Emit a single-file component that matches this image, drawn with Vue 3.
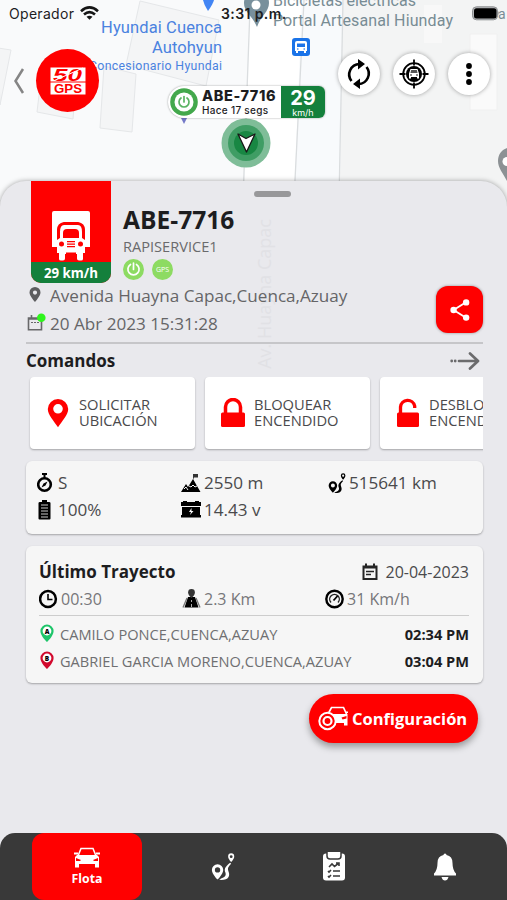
<template>
  <div class="screen">
    <svg class="map" width="507" height="200" viewBox="0 0 507 200">
      <rect width="507" height="200" fill="#f9fafb" />
      <path d="M342 0h165v200H340z" fill="#f3f4f4" />
      <path d="M250 0h52l-8 200h-50z" fill="#fff" />
      <path d="M302 0h40l-2 200h-46z" fill="#f8fafc" />
      <g fill="#f4f5f6" stroke="#e5e7e9">
        <path d="M140 1l79 19-13 66-80-21z" />
        <path d="M104 66l32 8-4 58-32-4z" />
        <path d="M-2 48l13 2-11 55z" />
        <path d="M40 87l35 7-2 25-36-7z" />
        <path d="M470 34h27v76h-27z" fill="#fafafa" stroke="#f0f0f0" />
        <path d="M424 5h18v38h-18z" fill="#f8f8f8" stroke="none" />
      </g>
      <path d="M250 8l-7 192M304 0l-10 200M343 0l-4 200" fill="none" stroke="#dadddf" stroke-width="1.3" />
      <path d="M203 0h11q-1 4-6 11-4-6-5-11z" fill="#4285f4" />
      <path d="M181 118h6l-3 6z" fill="#7479c8" />
      <path d="M244 3a12 12 0 0 1 25 0c0 9-8 12-12 24-5-12-13-15-13-24z" fill="#78909c" />
      <circle cx="256" cy="5" r="4.500" fill="#fff" />
      <g class="place">
        <text x="222" y="33" text-anchor="end" font-size="16.500" textLength="121">Hyundai Cuenca</text>
        <text x="222" y="53" text-anchor="end" font-size="16.500" textLength="70">Autohyun</text>
        <text x="222" y="70" text-anchor="end" font-size="12.300" textLength="133">Concesionario Hyundai</text>
      </g>
      <g class="place grey">
        <text x="273" y="6" font-size="16" textLength="143">Bicicletas eléctricas</text>
        <text x="273" y="26" font-size="16" textLength="180">Portal Artesanal Hiunday</text>
        <text x="498" y="19" font-size="14">a</text>
      </g>
      <rect x="292" y="38" width="18" height="18" rx="3" fill="#1a73e8" />
      <path d="M297 41h8q2 0 2 2v8h-1v2h-2v-2h-6v2h-2v-2h-1v-8q0-2 2-2z" fill="#fff" />
      <path d="M297 43.500h8v3.500h-8z" fill="#1a73e8" />
      <circle cx="297.800" cy="49" r=".8" fill="#1a73e8" />
      <circle cx="304.200" cy="49" r=".8" fill="#1a73e8" />
      <path d="M507 148c-6 2-9 7-9 13 0 7 5 12 9 20z" fill="#8c9194" />
      <path d="M507 157a4 4 0 0 0 0 9z" fill="#fff" />
      <circle cx="246" cy="143" r="24.500" fill="#7fbd98" />
      <circle cx="246" cy="143" r="18" fill="#3f9d64" />
      <circle cx="246" cy="143" r="12" fill="#188743" />
      <path d="M238 134l8 4.500 9-4.500-8.500 18z" fill="#fff" stroke="#161616" stroke-width="1.300" stroke-linejoin="round" />
    </svg>

    <div class="status-bar">
      <span class="carrier">Operador</span>
      <svg class="wifi" width="19" height="14" viewBox="0 0 19 14">
        <g fill="none" stroke="#161616" stroke-width="2.600">
          <path d="M1 5.200q8.500-7.500 17 0" />
          <path d="M4 8.600q5.500-4.800 11 0" />
        </g>
        <path d="M6.500 10.800q3-2.300 6 0l-3 3z" fill="#161616" />
      </svg>
      <span class="time">3:31 p.m.</span>
      <svg class="battery" width="28" height="15" viewBox="0 0 28 15">
        <rect x=".5" y=".8" width="25" height="13" rx="4" fill="#b5b7b9" stroke="#8e9092" />
        <rect x="2" y="2.300" width="22.500" height="10.200" rx="2.500" fill="#000" />
        <path d="M26.500 5q1.500 2 0 4.500z" fill="#777" />
      </svg>
    </div>

    <header class="toolbar">
      <svg class="back" width="12" height="28" viewBox="0 0 12 28">
        <path d="M10 2L2.500 14 10 26" fill="none" stroke="#858585" stroke-width="2.500" />
      </svg>
      <div class="brand">
        <svg width="36" height="28" viewBox="0 0 36 28">
          <rect x=".5" y=".5" width="35" height="27" fill="#fff" />
          <text x="3" y="13.500" class="brand-num" textLength="29" lengthAdjust="spacingAndGlyphs">50</text>
          <path d="M1 15L33 1" stroke="#fff" stroke-width="1" />
          <path d="M0 15h36" stroke="#f00" stroke-width="1" />
          <text x="4" y="25.500" class="brand-gps" textLength="28" lengthAdjust="spacingAndGlyphs">GPS</text>
        </svg>
      </div>
      <div class="actions">
        <button class="round">
          <svg width="28" height="30" viewBox="0 0 28 30">
            <g fill="none" stroke="#000" stroke-width="2.600">
              <path d="M6.500 22A10.500 10.500 0 0 1 14.500 5" />
              <path d="M21.500 8A10.500 10.500 0 0 1 13.500 25" />
            </g>
            <path d="M13 0l7 5-7 5.500zM15 19.500l-7 5.500 7 5z" />
          </svg>
        </button>
        <button class="round">
          <svg width="30" height="30" viewBox="0 0 30 30">
            <g fill="none" stroke="#000" stroke-width="1.800">
              <circle cx="15" cy="15" r="10.800" />
              <path d="M15 .5v6M15 23.500v6M.5 15h6M23.500 15h6" />
            </g>
            <circle cx="15" cy="15" r="8" />
            <path d="M11.500 10h7l1.500 4.500v5h-2v-1.500h-6v1.500h-2v-5z" fill="#fff" />
            <path d="M12.200 11h5.600l.8 3h-7.200z" fill="#555" />
            <circle cx="12" cy="16" r=".8" /><circle cx="18" cy="16" r=".8" />
          </svg>
        </button>
        <button class="round">
          <svg width="8" height="24" viewBox="0 0 8 24">
            <circle cx="4" cy="4" r="2.900" /><circle cx="4" cy="12" r="2.900" /><circle cx="4" cy="20" r="2.900" />
          </svg>
        </button>
      </div>
    </header>

    <div class="marker-label">
      <svg class="marker-power" width="28" height="28" viewBox="0 0 28 28">
        <circle cx="14" cy="14" r="13.800" fill="#43a84c" />
        <circle cx="14" cy="14" r="9.500" fill="#fff" />
        <g fill="none" stroke="#5ab463" stroke-width="1.700" stroke-linecap="round">
          <path d="M11 10a5 5 0 1 0 6 0" /><path d="M14 8.500V14" />
        </g>
      </svg>
      <div class="marker-text">
        <strong>{{ vehicle.plate }}</strong>
        <span>Hace 17 segs</span>
      </div>
      <div class="marker-speed">
        <strong>{{ vehicle.speed }}</strong>
        <span>km/h</span>
      </div>
    </div>

    <section class="sheet">
      <div class="handle"></div>
      <div class="street">Av. Huayna Capac</div>

      <div class="vehicle">
        <div class="vehicle-card">
          <svg width="40" height="50" viewBox="0 0 40 50">
            <path d="M3 0h34q2 0 2 2v34h-5V19q0-7-7-8H13q-7 1-7 8v17H1V2q0-2 2-2z" fill="#fff" />
            <path d="M7 36V21q0-9 9-9h8q9 0 9 9v15" fill="none" stroke="#f00" stroke-width="1.500" />
            <path d="M13 14h14q4 0 4 7v6l3 2v13h-2v6q0 1.500-2 1.500h-2q-2 0-2-2V43H14v4.500q0 2-2 2h-2q-2 0-2-1.500v-6H6V29l3-2v-6q0-7 4-7z" fill="#fff" />
            <path d="M12 27v-5q0-4 4-4h8q4 0 4 4v5z" fill="#f00" />
            <g fill="#f00">
              <circle cx="10.500" cy="33" r="2.500" /><circle cx="29.500" cy="33" r="2.500" />
              <path d="M16 30h8v1.300h-8zM16 32.500h8v1.300h-8zM16 35h8v1.300h-8z" />
              <path d="M15 41.500h10v2.500H15z" />
            </g>
          </svg>
          <div class="vehicle-speed">{{ vehicle.speed }} km/h</div>
        </div>
        <div class="vehicle-info">
          <h1>{{ vehicle.plate }}</h1>
          <p>RAPISERVICE1</p>
          <div class="badges">
            <span class="badge">
              <svg width="21" height="21" viewBox="0 0 21 21">
                <path d="M7.500 5.500a5.600 5.600 0 1 0 6 0M10.500 4v6.500" fill="none" stroke="#fff" stroke-width="1.700" stroke-linecap="round" />
              </svg>
            </span>
            <span class="badge">GPS</span>
          </div>
        </div>
      </div>

      <div class="place-block">
        <div>
          <div class="place-row">
            <svg width="24" height="20" viewBox="0 0 24 20">
              <path d="M9 2a5.500 5.500 0 0 0-5.500 5.500C3.500 11 9 17 9 17s5.500-6 5.500-9.500A5.500 5.500 0 0 0 9 2zm0 3.500a2 2 0 1 1 0 4.200 2 2 0 0 1 0-4.200z" fill="#5d5d5f" />
            </svg>
            <span class="address">Avenida Huayna Capac,Cuenca,Azuay</span>
          </div>
          <div class="place-row">
            <svg width="24" height="20" viewBox="0 0 24 20">
              <path d="M2.500 5h13v11.700h-13zM3 6h12M5.500 2v3" fill="none" stroke="#68686a" stroke-width="1.600" />
              <path d="M5 9.500h2M8 9.500h2M11 9.500h2" stroke="#68686a" stroke-width="1.200" />
              <circle cx="15.300" cy="4.700" r="4.300" fill="#2ff51c" />
            </svg>
            <span class="date">20 Abr 2023 15:31:28</span>
          </div>
        </div>
        <button class="share">
          <svg width="22" height="24" viewBox="0 0 24 24">
            <path d="M18.500 3.500L5 12l13.500 8.500" fill="none" stroke="#fff" stroke-width="2" />
            <g fill="#fff"><circle cx="18.700" cy="3.700" r="3.500" /><circle cx="5" cy="12" r="3.500" /><circle cx="18.700" cy="20.300" r="3.500" /></g>
          </svg>
        </button>
      </div>

      <div class="commands-head">
        <h2>Comandos</h2>
        <svg width="30" height="18" viewBox="0 0 30 18">
          <path d="M9 9h18M20 1.500L28 9l-8 7.500" fill="none" stroke="#6b6b6d" stroke-width="2.700" stroke-linejoin="round" stroke-linecap="round" />
          <circle cx="1.700" cy="9" r="1.400" fill="#6b6b6d" /><circle cx="5.200" cy="9" r="1.400" fill="#6b6b6d" />
        </svg>
      </div>
      <div class="commands">
        <button v-for="c in commands" :key="c.icon" class="command">
          <svg width="26" height="30" viewBox="0 0 26 30" fill="#f00">
            <path v-if="c.icon === 'pin'" d="M13 1A10.200 10.200 0 0 0 2.800 11C2.800 17 9 23 13 29.300 17 23 23.200 17 23.200 11A10.200 10.200 0 0 0 13 1zm0 5a4.800 4.800 0 1 1 0 9.600A4.800 4.800 0 0 1 13 6z" />
            <template v-else>
              <rect :x="c.icon === 'lock' ? 1 : 2" y="14.500" :width="c.icon === 'lock' ? 24 : 22" height="14.500" rx="1.500" />
              <path v-if="c.icon === 'lock'" d="M5.500 15V9a7.500 7.500 0 0 1 15 0v6" fill="none" stroke="#f00" stroke-width="3.500" />
              <path v-else d="M5.500 15V9a7.200 7.200 0 0 1 14.200-1v2" fill="none" stroke="#f00" stroke-width="3.300" />
            </template>
          </svg>
          <span>{{ c.top }}<br>{{ c.bottom }}</span>
        </button>
      </div>

      <div class="card stats">
        <div class="stat">
          <svg width="18" height="20" viewBox="0 0 18 20">
            <circle cx="7.500" cy="11.500" r="6.300" fill="none" stroke="#000" stroke-width="2.600" />
            <path d="M5 0h5v2H5zM6.500 0h2v5h-2zM4.500 14.500l2-4 4-2-2 4z" />
          </svg>
          <span>S</span>
        </div>
        <div class="stat">
          <svg width="20" height="20" viewBox="0 0 20 20">
            <path d="M0 19l5-8 2 3 5-8 7.500 13z" />
            <path d="M12 7V1h5v3.500h-4" fill="#333" />
            <path d="M8 13l2 1 2-2 2 2 2-1M3 16l2-2 2 3" fill="none" stroke="#f6f6f6" stroke-width="1" />
          </svg>
          <span>2550 m</span>
        </div>
        <div class="stat">
          <svg width="18" height="20" viewBox="0 0 22 24">
            <use href="#route" />
          </svg>
          <span>515641 km</span>
        </div>
        <div class="stat">
          <svg width="18" height="20" viewBox="0 0 18 20">
            <path d="M5 0h5v2h2q1.500 0 1.500 1v15.500q0 1-1 1h-10q-1 0-1-1V3q0-1 1.500-1h2z" />
            <path d="M4 5h7M4 8h7M4 11h7M4 14h7M4 17h7" stroke="#c9c9c9" stroke-width="1" />
          </svg>
          <span>100%</span>
        </div>
        <div class="stat">
          <svg width="20" height="20" viewBox="0 0 20 20">
            <path d="M0 2h2V1h4v1h8V1h4v1h2v4H0zM1 7h18v8H1zM0 15h20v2.500H0z" />
            <path d="M10.500 8L8 12h2l-1 3 3.500-4h-2z" fill="#fff" />
          </svg>
          <span>14.43 v</span>
        </div>
      </div>

      <div class="card trip">
        <div class="trip-head">
          <h2>Último Trayecto</h2>
          <span class="trip-date">
            <svg width="16" height="18" viewBox="0 0 16 18">
              <path d="M1.500 3.500h13V16h-13zM1 4.500h14M4 .5V4M12 .5V4" fill="none" stroke="#252525" stroke-width="2" />
              <path d="M4 8.500h8M4 11.500h5" stroke="#252525" stroke-width="1.500" />
            </svg>
            20-04-2023
          </span>
        </div>
        <div class="trip-stats">
          <div class="stat">
            <svg width="20" height="20" viewBox="0 0 20 20">
              <circle cx="9" cy="10" r="7.900" fill="none" stroke="#000" stroke-width="2.500" />
              <path d="M9 5v5.500h4.500" fill="none" stroke="#000" stroke-width="1.600" />
            </svg>
            <span>00:30</span>
          </div>
          <div class="stat">
            <svg width="20" height="20" viewBox="0 0 20 20">
              <path d="M6 8h7l3.500 10.500h-14z" />
              <path d="M5 9L1 18.500M14 9l4 9.500" stroke="#777" stroke-width="1.300" />
              <path d="M9.500 0a3.400 3.400 0 0 1 3.400 3.400c0 2.600-3.400 5.600-3.400 5.600S6.100 6 6.100 3.400A3.400 3.400 0 0 1 9.500 0z" fill="#333" />
              <path d="M9.500 11v2M9.500 15v3" stroke="#aaa" />
            </svg>
            <span>2.3 Km</span>
          </div>
          <div class="stat">
            <svg width="20" height="20" viewBox="0 0 20 20">
              <circle cx="9.500" cy="10" r="8.200" fill="none" stroke="#000" stroke-width="2.400" />
              <path d="M6 13.500a4.800 4.800 0 1 1 7 0" fill="none" stroke="#222" stroke-width="1.400" />
              <path d="M8.500 11.500l4-4.500" stroke="#000" stroke-width="1.800" />
            </svg>
            <span>31 Km/h</span>
          </div>
        </div>
        <div v-for="s in stops" :key="s.letter" class="stop">
          <svg width="15" height="19" viewBox="0 0 15 19">
            <path d="M8 .5A6.600 6.600 0 0 0 1.400 7C1.400 12 8 18 8 18S14.600 12 14.600 7A6.600 6.600 0 0 0 8 .5z" :fill="s.color" />
            <circle cx="8" cy="7" r="4.400" fill="#fff" />
            <text x="8" y="9.500" text-anchor="middle" class="stop-letter">{{ s.letter }}</text>
          </svg>
          <span class="stop-name">{{ s.name }}</span>
          <strong>{{ s.time }}</strong>
        </div>
      </div>

      <button class="config">
        <svg width="31" height="25" viewBox="0 0 31 25">
          <path d="M10 8l3.500-6.500h12L28.500 8" fill="none" stroke="#fff" stroke-width="1.700" />
          <path d="M13 8h16.500v11.500H26V17H15z" fill="#fff" />
          <path d="M28.500 10l-5 1.500 1 2 4-1z" fill="#f00" />
          <path d="M28 5.500h2v1.500h-2z" fill="#fff" />
          <circle cx="9.500" cy="15" r="8.200" fill="#f00" stroke="#fff" stroke-width="2" />
          <circle cx="9.500" cy="15" r="4" fill="none" stroke="#fff" stroke-width="2.200" />
        </svg>
        Configuración
      </button>

      <nav class="tabs">
        <div class="tab active">
          <svg width="28" height="22" viewBox="0 0 28 22">
            <path d="M5 9l3-7.500h12L23 9" fill="none" stroke="#fff" stroke-width="1.500" />
            <path d="M4 8h20l2 2v10.500h-4V17H6v3.500H2V10z" fill="#fff" />
            <path d="M1 5.500h4v2H1zM23 5.500h4v2h-4z" fill="#fff" />
            <path d="M3 11l5 2-1 1H3zM25 11l-5 2 1 1h4z" fill="#f00" />
          </svg>
          <span>Flota</span>
        </div>
        <div class="tab">
          <svg width="24" height="28" viewBox="0 0 22 25" class="white">
            <g id="route">
              <path d="M6 10a5.200 5.200 0 0 0-5.200 5.200C.8 19 6 24 6 24s5.200-5 5.200-8.800A5.200 5.200 0 0 0 6 10zm0 2.700a2.400 2.400 0 1 1 0 4.900 2.400 2.400 0 0 1 0-4.900z" />
              <path d="M7.500 24.300c9 .7 10-4 8.700-7.300-1-3-1.200-4 2.300-7.500l-1-1c-5 4-5.500 6-4.300 9 1 3-.7 4.500-4 5.500z" />
              <path d="M18.500 0A2.800 2.800 0 0 0 15.700 2.800C15.700 5 18.500 8 18.500 8s2.800-3 2.800-5.200A2.800 2.800 0 0 0 18.500 0zm0 1.700a1.300 1.300 0 1 1 0 2.600 1.300 1.300 0 0 1 0-2.600z" />
            </g>
          </svg>
        </div>
        <div class="tab">
          <svg width="24" height="29" viewBox="0 0 24 29">
            <rect x="1" y="1.500" width="22" height="27" rx="3" fill="#fff" />
            <path d="M5 0v4q0 3 3 3h8q3 0 3-3V0" fill="#fff" stroke="#393939" stroke-width="1.500" />
            <path d="M7 15l3-3 2.500 2.500L17 11M14 11h3v3M6 19l1 1 2-2M11 19h7M6 24l1 1 2-2M11 24h7" fill="none" stroke="#393939" stroke-width="1.600" />
          </svg>
        </div>
        <div class="tab">
          <svg width="22" height="28" viewBox="0 0 22 28" class="white">
            <path d="M9.500 2q0-1.500 1.500-1.500T12.500 2q6 1 6 8 0 7 3.500 10.500v2H0v-2Q3.500 17 3.500 10q0-7 6-8zM7.500 24h7q-1 3.500-3.500 3.500T7.500 24z" />
          </svg>
        </div>
      </nav>
    </section>
  </div>
</template>

<script setup>
import { ref } from 'vue'

const vehicle = ref({ plate: 'ABE-7716', speed: 29 })

const commands = [
  { icon: 'pin', top: 'SOLICITAR', bottom: 'UBICACIÓN' },
  { icon: 'lock', top: 'BLOQUEAR', bottom: 'ENCENDIDO' },
  { icon: 'unlock', top: 'DESBLOQUEAR', bottom: 'ENCENDIDO' }
]

const stops = [
  { letter: 'A', name: 'CAMILO PONCE,CUENCA,AZUAY', time: '02:34 PM', color: '#1ec56a' },
  { letter: 'B', name: 'GABRIEL GARCIA MORENO,CUENCA,AZUAY', time: '03:04 PM', color: '#d20a2e' }
]
</script>

<style>
body {
  margin: 0;
}
</style>

<style scoped>
.screen {
  position: relative;
  display: flex;
  flex-direction: column;
  width: 507px;
  height: 900px;
  overflow: hidden;
  background: #f3f4f4;
  font-family: "Open Sans", "Noto Sans", sans-serif;
  color: #1d1d1f;
}

* {
  box-sizing: border-box;
}

svg {
  display: block;
  flex: none;
}

h1,
h2,
p {
  margin: 0;
}

button {
  padding: 0;
  border: 0;
  font-family: inherit;
}

.map {
  position: absolute;
  top: 0;
  left: 0;
}

.place {
  fill: #4a82e0;
  font-family: Roboto, sans-serif;
}

.place.grey {
  fill: #788c94;
}

.status-bar {
  position: relative;
  display: flex;
  align-items: center;
  height: 27px;
  padding: 0 7px 0 9px;
  font-family: Inter, sans-serif;
  font-size: 14px;
}

.carrier {
  width: 66px;
  letter-spacing: 0.3px;
}

.wifi {
  margin: -2px 0 0 5px;
}

.time {
  margin-left: 122px;
  font-weight: 600;
  letter-spacing: 0.4px;
  white-space: nowrap;
}

.battery {
  margin: -1px 0 0 auto;
}

.toolbar {
  position: relative;
  display: flex;
  align-items: center;
  height: 66px;
  margin-top: 20px;
  padding: 0 17px 0 13px;
}

.back {
  margin-top: 2px;
}

.brand {
  display: flex;
  align-items: center;
  justify-content: center;
  width: 63px;
  height: 63px;
  margin: 1px 0 0 11px;
  border-radius: 50%;
  background: #f00;
}

.brand-num,
.brand-gps {
  font-family: "Liberation Sans", sans-serif;
  font-weight: bold;
  fill: #f00;
}

.brand-num {
  font-size: 17px;
  font-style: italic;
}

.brand-gps {
  font-size: 12px;
}

.actions {
  display: flex;
  gap: 13px;
  margin: -13px 0 0 auto;
}

.round {
  display: flex;
  align-items: center;
  justify-content: center;
  width: 42px;
  height: 42px;
  border-radius: 50%;
  background: #fff;
  box-shadow: 0 0 4px rgba(0, 0, 0, 0.35);
}

.marker-label {
  position: absolute;
  top: 86px;
  left: 168px;
  display: flex;
  width: 157px;
  height: 32px;
  border-radius: 16px 6px 6px 16px;
  background: #fff;
  box-shadow: 0 0 2px rgba(0, 0, 0, 0.4);
  overflow: hidden;
}

.marker-power {
  margin: 2px 0 0 2px;
}

.marker-text {
  width: 83px;
  padding-left: 4px;
  font-family: Inter, sans-serif;
  white-space: nowrap;
}

.marker-text strong,
.marker-text span,
.marker-speed strong,
.marker-speed span {
  display: block;
}

.marker-text strong {
  font-size: 14.5px;
  font-weight: 800;
  line-height: 19px;
  letter-spacing: 0.6px;
}

.marker-text span {
  font-size: 10px;
  font-weight: 500;
  line-height: 11px;
  letter-spacing: 0.3px;
}

.marker-speed {
  flex: 1;
  background: #14803c;
  color: #fff;
  font-family: Inter, sans-serif;
  text-align: center;
}

.marker-speed strong {
  font-size: 20px;
  line-height: 22px;
  padding-top: 1px;
}

.marker-speed span {
  font-size: 9px;
  line-height: 9px;
  margin-top: -1px;
}

.sheet {
  position: relative;
  display: flex;
  flex: 1;
  flex-direction: column;
  margin-top: 68px;
  padding: 0 24px 0 26px;
  border-radius: 26px 26px 0 0;
  background: #e9e9ed;
  box-shadow: 0 0 5px rgba(0, 0, 0, 0.35);
}

.handle {
  position: absolute;
  top: 10px;
  left: 254px;
  width: 37px;
  height: 6px;
  border-radius: 3px;
  background: #98989a;
}

.street {
  position: absolute;
  top: 38px;
  left: 254px;
  color: #e1e1e5;
  font-size: 18px;
  line-height: 20px;
  writing-mode: vertical-rl;
  transform: rotate(180deg);
}

.vehicle {
  position: relative;
  display: flex;
  height: 103px;
  padding-left: 5px;
}

.vehicle-card {
  display: flex;
  flex-direction: column;
  align-items: center;
  width: 80px;
  height: 102px;
  padding-top: 30px;
  border-radius: 0 0 10px 10px;
  background: #f00;
  overflow: hidden;
}

.vehicle-speed {
  width: 100%;
  height: 21px;
  margin-top: auto;
  background: #14803c;
  color: #fff;
  font-size: 13.3px;
  font-weight: 700;
  line-height: 22px;
  text-align: center;
}

.vehicle-info {
  padding: 23px 0 0 12px;
}

.vehicle-info h1 {
  font-size: 24.6px;
  line-height: 32px;
}

.vehicle-info p {
  color: #6a6a6c;
  font-size: 14.6px;
  line-height: 20px;
}

.badges {
  display: flex;
  gap: 8px;
  margin-top: 3px;
}

.badge {
  display: flex;
  align-items: center;
  justify-content: center;
  width: 21px;
  height: 21px;
  border-radius: 50%;
  background: #8ddb62;
  color: #fff;
  font-size: 7px;
}

.place-block {
  position: relative;
  display: flex;
  justify-content: space-between;
  height: 60px;
  padding-top: 2px;
  border-bottom: 2px solid #c6c6c9;
}

.place-row {
  display: flex;
  align-items: center;
  height: 28px;
  margin-top: -5px;
  color: #656567;
  font-size: 17.1px;
}

.place-row + .place-row {
  margin-top: 0;
}

.share {
  display: flex;
  align-items: center;
  justify-content: center;
  width: 47px;
  height: 47px;
  border-radius: 12px;
  background: #f00;
  box-shadow: 0 0 3px rgba(0, 0, 0, 0.4);
}

.commands-head {
  display: flex;
  align-items: center;
  justify-content: space-between;
  height: 33px;
  padding-right: 3px;
}

h2 {
  font-size: 17px;
}

.commands {
  display: flex;
  flex: none;
  gap: 10px;
  height: 76px;
  padding-left: 4px;
  overflow: hidden;
}

.command {
  display: flex;
  flex: none;
  align-items: center;
  gap: 8px;
  width: 165px;
  height: 72px;
  padding-left: 15px;
  border-radius: 4px;
  background: #fff;
  box-shadow: 0 1px 2px rgba(0, 0, 0, 0.3);
  color: #4a4a4c;
  font-size: 14.7px;
  line-height: 16px;
  text-align: left;
}

.command span {
  margin-top: -3px;
}

.card {
  flex: none;
  border-radius: 6px;
  background: #f6f6f6;
  box-shadow: 0 1px 2px rgba(0, 0, 0, 0.3);
}

.stats {
  display: grid;
  grid-template-columns: 144px 147px 1fr;
  grid-template-rows: 27px 27px;
  height: 73px;
  margin-top: 8px;
  padding: 8px 0 0 11px;
}

.stat {
  display: flex;
  align-items: center;
  gap: 3px;
  color: #4a4a4c;
  font-size: 17.1px;
  white-space: nowrap;
}

.trip {
  height: 137px;
  margin-top: 12px;
  padding: 12px 14px 0 13px;
}

.trip-head {
  display: flex;
  align-items: center;
  justify-content: space-between;
  height: 27px;
}

.trip-date {
  display: flex;
  gap: 8px;
  align-items: center;
  color: #4a4a4c;
  font-size: 16px;
}

.trip-stats {
  display: grid;
  grid-template-columns: 143px 143px 1fr;
  height: 31px;
  padding-bottom: 2px;
  margin-bottom: 4px;
  border-bottom: 1px solid #cdcdcd;
}

.trip-stats .stat {
  gap: 2px;
  color: #77777a;
  font-size: 16px;
}

.stop {
  display: flex;
  align-items: center;
  height: 27px;
  font-size: 14.6px;
  white-space: nowrap;
}

.stop-name {
  margin-left: 6px;
  color: #6f6f71;
}

.stop strong {
  margin-left: auto;
}

.stop-letter {
  font-size: 6.5px;
  font-weight: 800;
}

.config {
  display: flex;
  flex: none;
  align-items: center;
  align-self: flex-end;
  gap: 3px;
  width: 169px;
  height: 49px;
  margin: 11px 5px 0 0;
  padding-left: 9px;
  border-radius: 25px;
  background: #f00;
  box-shadow: 0 4px 7px rgba(0, 0, 0, 0.35);
  color: #fff;
  font-size: 16.5px;
  font-weight: 700;
}

.tabs {
  display: flex;
  flex: none;
  height: 67px;
  margin: auto -24px 0 -26px;
  padding-left: 32px;
  border-radius: 15px 15px 0 0;
  background: #393939;
}

.tab {
  display: flex;
  align-items: center;
  justify-content: center;
  width: 111px;
}

.tab.active {
  flex-direction: column;
  width: 110px;
  margin-right: 25px;
  padding-top: 3px;
  border-radius: 12px;
  background: #f00;
  color: #fff;
  font-size: 12.3px;
  font-weight: 700;
  line-height: 20px;
}

.white {
  fill: #fff;
}
</style>
